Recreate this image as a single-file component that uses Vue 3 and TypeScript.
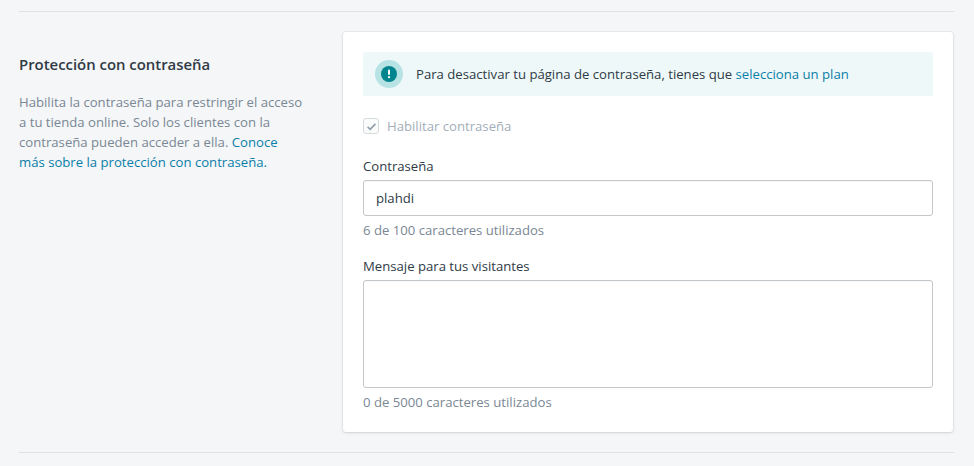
<script setup lang="ts">
const passwordHelp = '6 de 100 caracteres utilizados'
const messageHelp = '0 de 5000 caracteres utilizados'
</script>

<template>
  <div class="page">
    <section class="section">
      <aside class="intro">
        <h2 class="title">Protección con contraseña</h2>
        <p class="desc">
          Habilita la contraseña para restringir el acceso a tu tienda online. Solo los clientes con la contraseña pueden acceder a ella.
          <a class="link">Conoce más sobre la protección con contraseña.</a>
        </p>
      </aside>
      <div class="card">
        <div class="banner">
          <span class="halo">
            <svg viewBox="0 0 16 16" width="16" height="16">
              <circle cx="8" cy="8" r="8" fill="#00848e" />
              <rect x="7" y="3.6" width="2" height="5.4" rx="1" fill="#fff" />
              <circle cx="8" cy="11.2" r="1.1" fill="#fff" />
            </svg>
          </span>
          <span class="banner-text">Para desactivar tu página de contraseña, tienes que <a class="link">selecciona un plan</a></span>
        </div>
        <label class="check">
          <span class="box">
            <svg viewBox="0 0 16 16" width="13" height="13">
              <path d="M3.2 8.4 6.4 11.4 12.8 4.8" fill="none" stroke="#919eab" stroke-width="2" />
            </svg>
          </span>
          <span>Habilitar contraseña</span>
        </label>
        <div class="field first">
          <div class="label">Contraseña</div>
          <input class="input" type="text" value="plahdi" />
          <div class="help">{{ passwordHelp }}</div>
        </div>
        <div class="field second">
          <div class="label">Mensaje para tus visitantes</div>
          <textarea class="area"></textarea>
          <div class="help">{{ messageHelp }}</div>
        </div>
      </div>
    </section>
  </div>
</template>

<style>
html, body { margin: 0; background: #f4f6f8; }
</style>

<style scoped>
.page {
  box-sizing: border-box;
  width: 974px;
  height: 466px;
  padding: 11px 20px 0 19px;
  background: #f4f6f8;
  font-family: "Open Sans", "Noto Sans", sans-serif;
  font-size: 13.15px;
  line-height: 20px;
  color: #2f3a45;
}
.section {
  display: flex;
  box-sizing: border-box;
  height: 442px;
  padding-top: 20px;
  border-top: 1px solid #dfe3e8;
  border-bottom: 1px solid #dfe3e8;
}
.intro { width: 324px; flex: none; padding-top: 21px; }
.title { margin: 0; font-size: 14.9px; font-weight: 600; line-height: 22px; color: #2f3a45; }
.desc { margin: 17px 0 0; width: 286px; color: #7a8794; }
.link { color: #0a7ea8; }
.card {
  box-sizing: border-box;
  width: 610px;
  height: 400px;
  padding: 20px;
  background: #fff;
  border-radius: 3px;
  box-shadow: 0 0 0 1px rgba(63, 63, 68, .05), 0 1px 3px 0 rgba(63, 63, 68, .15);
}
.banner {
  display: flex;
  align-items: center;
  gap: 13px;
  height: 44px;
  padding-left: 12px;
  background: #eef8f9;
  border-radius: 2px;
}
.halo {
  display: flex;
  align-items: center;
  justify-content: center;
  width: 28px;
  height: 28px;
  border-radius: 50%;
  background: #b7e3e5;
}
.check {
  display: flex;
  align-items: center;
  gap: 8px;
  margin-top: 20px;
  color: #a3aeb9;
}
.box {
  display: flex;
  align-items: center;
  justify-content: center;
  box-sizing: border-box;
  width: 16px;
  height: 16px;
  background: #fafbfb;
  border: 1px solid #d6dbe0;
  border-radius: 3px;
}
.field.first { margin-top: 20px; }
.field.second { margin-top: 16px; }
.label { height: 20px; margin-bottom: 4px; }
.input, .area {
  display: block;
  box-sizing: border-box;
  width: 100%;
  margin: 0;
  background: #fff;
  border: 1px solid #c4c7ca;
  border-radius: 3px;
  outline: none;
  font: inherit;
  color: #2f3a45;
  box-shadow: inset 0 1px 0 0 rgba(99, 115, 129, .05);
}
.input { height: 36px; padding: 0 12px; }
.area { height: 108px; resize: none; }
.help { margin-top: 4px; height: 20px; color: #7a8794; }
</style>
